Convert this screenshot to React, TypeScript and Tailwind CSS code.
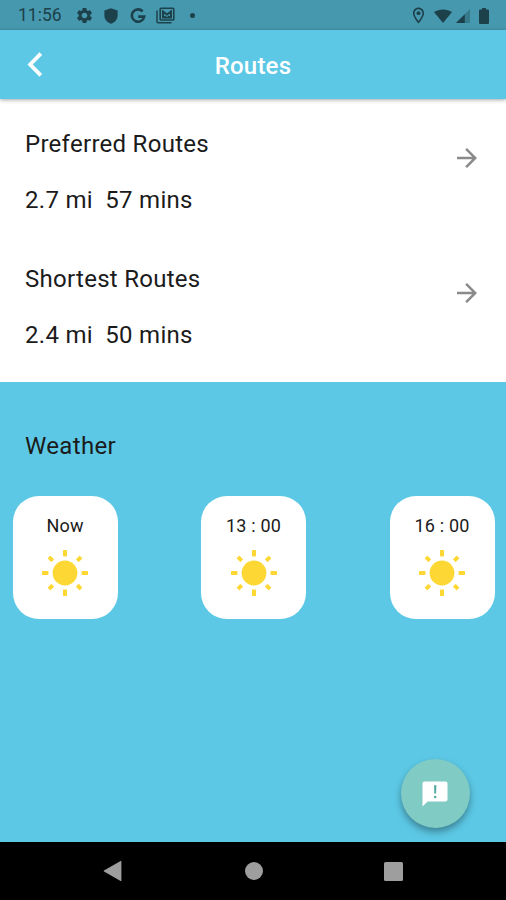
import React from 'react';
import { MdArrowForward, MdOutlineLocationOn, MdSettings } from 'react-icons/md';

const routes = [
  { id: 1, title: "Preferred Routes", distance: "2.7 mi", time: "57 mins" },
  { id: 2, title: "Shortest Routes", distance: "2.4 mi", time: "50 mins" },
];

const forecast = ["Now", "13 : 00", "16 : 00"];

const RAYS = [0, 45, 90, 135, 180, 225, 270, 315];

const Sun: React.FC = () => (
  <svg viewBox="-24 -24 48 48" className="h-12 w-12" fill="#fdd835">
    <circle r="12.4" />
    {RAYS.map((angle) => (
      <rect
        key={angle}
        x="-2"
        y={angle % 90 ? -22.7 : -23}
        width="4"
        height={angle % 90 ? 5.4 : 6.4}
        rx="0.6"
        transform={`rotate(${angle})`}
      />
    ))}
  </svg>
);

const StatusBar: React.FC = () => (
  <div className="flex h-[30px] items-center justify-between bg-[#4698ae] pl-[18px] pr-[17px] pt-px text-[#1d414b]">
    <div className="flex items-center">
      <span className="w-[57px] pt-px text-[17.5px] leading-none">11:56</span>
      <MdSettings size={19} />
      <svg viewBox="0 0 14 16" className="ml-[10px] h-4 w-[14px]" fill="currentColor">
        <path d="M7 0.3L13.6 2.6V7.5C13.6 11.4 10.7 14.7 7 15.8C3.3 14.7 0.4 11.4 0.4 7.5V2.6Z" />
      </svg>
      <svg viewBox="0 0 16 16" className="ml-3 h-4 w-4" fill="none" stroke="currentColor" strokeWidth="2.6">
        <path d="M12.7 3.4A6.2 6.2 0 1 0 14.2 8.6H8.2" />
      </svg>
      {/* Stacked mail notification */}
      <svg viewBox="0 0 19 17" className="ml-[10px] h-[17px] w-[19px]" fill="none" stroke="currentColor">
        <path d="M1 3.5V14.5Q1 15.8 2.3 15.8H15.5" strokeWidth="1.5" />
        <rect x="4.2" y="1.2" width="13.6" height="11.8" rx="0.8" strokeWidth="1.6" />
        <path d="M7 11V4.6L11 7.6L15 4.6V11" strokeWidth="2" />
        <path d="M6 11.5L9 8.5L11 10L13 8.5L16 11.5Z" fill="currentColor" stroke="none" />
      </svg>
      <span className="ml-[15px] h-[5px] w-[5px] rounded-full bg-[#1d414b]" />
    </div>
    <div className="flex items-center">
      <MdOutlineLocationOn size={19} />
      <svg viewBox="0 0 18 14" className="ml-[6px] h-[14px] w-[18px]" fill="currentColor">
        <path d="M9 14L0 3C5 -0.5 13 -0.5 18 3Z" />
      </svg>
      <svg viewBox="0 0 14 14" className="ml-1 h-[14px] w-[14px]" fill="currentColor">
        <path d="M14 0V14H0Z" opacity="0.35" />
        <path d="M8.8 5.2V14H0Z" />
      </svg>
      <svg viewBox="0 0 10 16" className="ml-[9px] h-4 w-[10px]" fill="currentColor">
        <path d="M3 0H7V1.6H9Q10 1.6 10 2.6V15Q10 16 9 16H1Q0 16 0 15V2.6Q0 1.6 1 1.6H3Z" />
      </svg>
    </div>
  </div>
);

export default function App() {
  return (
    <div className="flex h-[900px] w-[506px] flex-col overflow-hidden bg-[#5cc8e5] font-['Roboto',sans-serif] text-[#1b1b1b]">
      <StatusBar />

      {/* App bar */}
      <header className="relative z-10 grid h-[69px] grid-cols-3 items-center bg-[#5cc8e5] shadow-[0_1px_4px_rgba(0,0,0,0.35)]">
        <button className="ml-[27px] w-4" aria-label="Back">
          <svg viewBox="0 0 16 25" className="h-[25px] w-4" fill="none" stroke="white" strokeWidth="3.8">
            <path d="M13.8 1.7L3.2 12.5L13.8 23.3" />
          </svg>
        </button>
        <h1 className="pt-0.5 text-center text-[24px] font-medium tracking-[0.2px] text-white">Routes</h1>
      </header>

      {/* Route list */}
      <section className="h-[283px] bg-white pt-[29px]">
        {routes.map((route) => (
          <div key={route.id} className="flex h-[135px] justify-between pl-[25px] pr-[26px]">
            <div className="flex flex-col gap-6 text-[24px] leading-8 tracking-[0.28px]">
              <p>{route.title}</p>
              <p className="whitespace-pre">{route.distance}{"  "}{route.time}</p>
            </div>
            <MdArrowForward size={30} className="mt-[15px] -mr-0.5 text-[#8a8a8a]" />
          </div>
        ))}
      </section>

      {/* Weather */}
      <section className="flex-1 pt-12">
        <h2 className="pl-[25px] text-[24px] leading-8 tracking-[0.35px]">Weather</h2>
        <div className="mt-[34px] flex justify-between pl-[12.5px] pr-[11.5px]">
          {forecast.map((time) => (
            <div key={time} className="flex h-[123px] w-[105px] flex-col items-center rounded-[26px] bg-white pt-[18px]">
              <span className="text-[18px] leading-6 tracking-[0.2px]">{time}</span>
              <div className="mt-[11px]">
                <Sun />
              </div>
            </div>
          ))}
        </div>
      </section>

      <button
        aria-label="Feedback"
        className="absolute left-[401px] top-[759px] flex h-[69px] w-[69px] items-center justify-center rounded-full bg-[#80cbc4] pr-px text-white shadow-[0_4px_7px_rgba(0,0,0,0.35)]"
      >
        <svg viewBox="0 0 26 26" className="h-[26px] w-[26px]" fill="none">
          <path d="M2.6 0.5H23.4Q25.5 0.5 25.5 2.6V18.4Q25.5 20.5 23.4 20.5H5.6L0.5 25.5V2.6Q0.5 0.5 2.6 0.5Z" fill="white" />
          <path d="M12 4.2H14.4L14.1 12.4H12.3Z" fill="#55aaa1" />
          <circle cx="13.2" cy="16" r="1.3" fill="#55aaa1" />
        </svg>
      </button>

      {/* System navigation */}
      <nav className="flex h-[58px] items-center bg-black pl-[103px]">
        <svg viewBox="0 0 20 22" className="h-[22px] w-5" fill="#9e9e9e">
          <path d="M18.4 0.8V20.8Q18.4 21.6 17.6 21L1 11.6Q0.2 11 1 10.4L17.6 0.9Z" />
        </svg>
        <div className="ml-[121.5px] h-[18px] w-[18px] rounded-full bg-[#9e9e9e]" />
        <div className="ml-[121.5px] h-[19px] w-[19px] rounded-[1.5px] bg-[#9e9e9e]" />
      </nav>
    </div>
  );
}
